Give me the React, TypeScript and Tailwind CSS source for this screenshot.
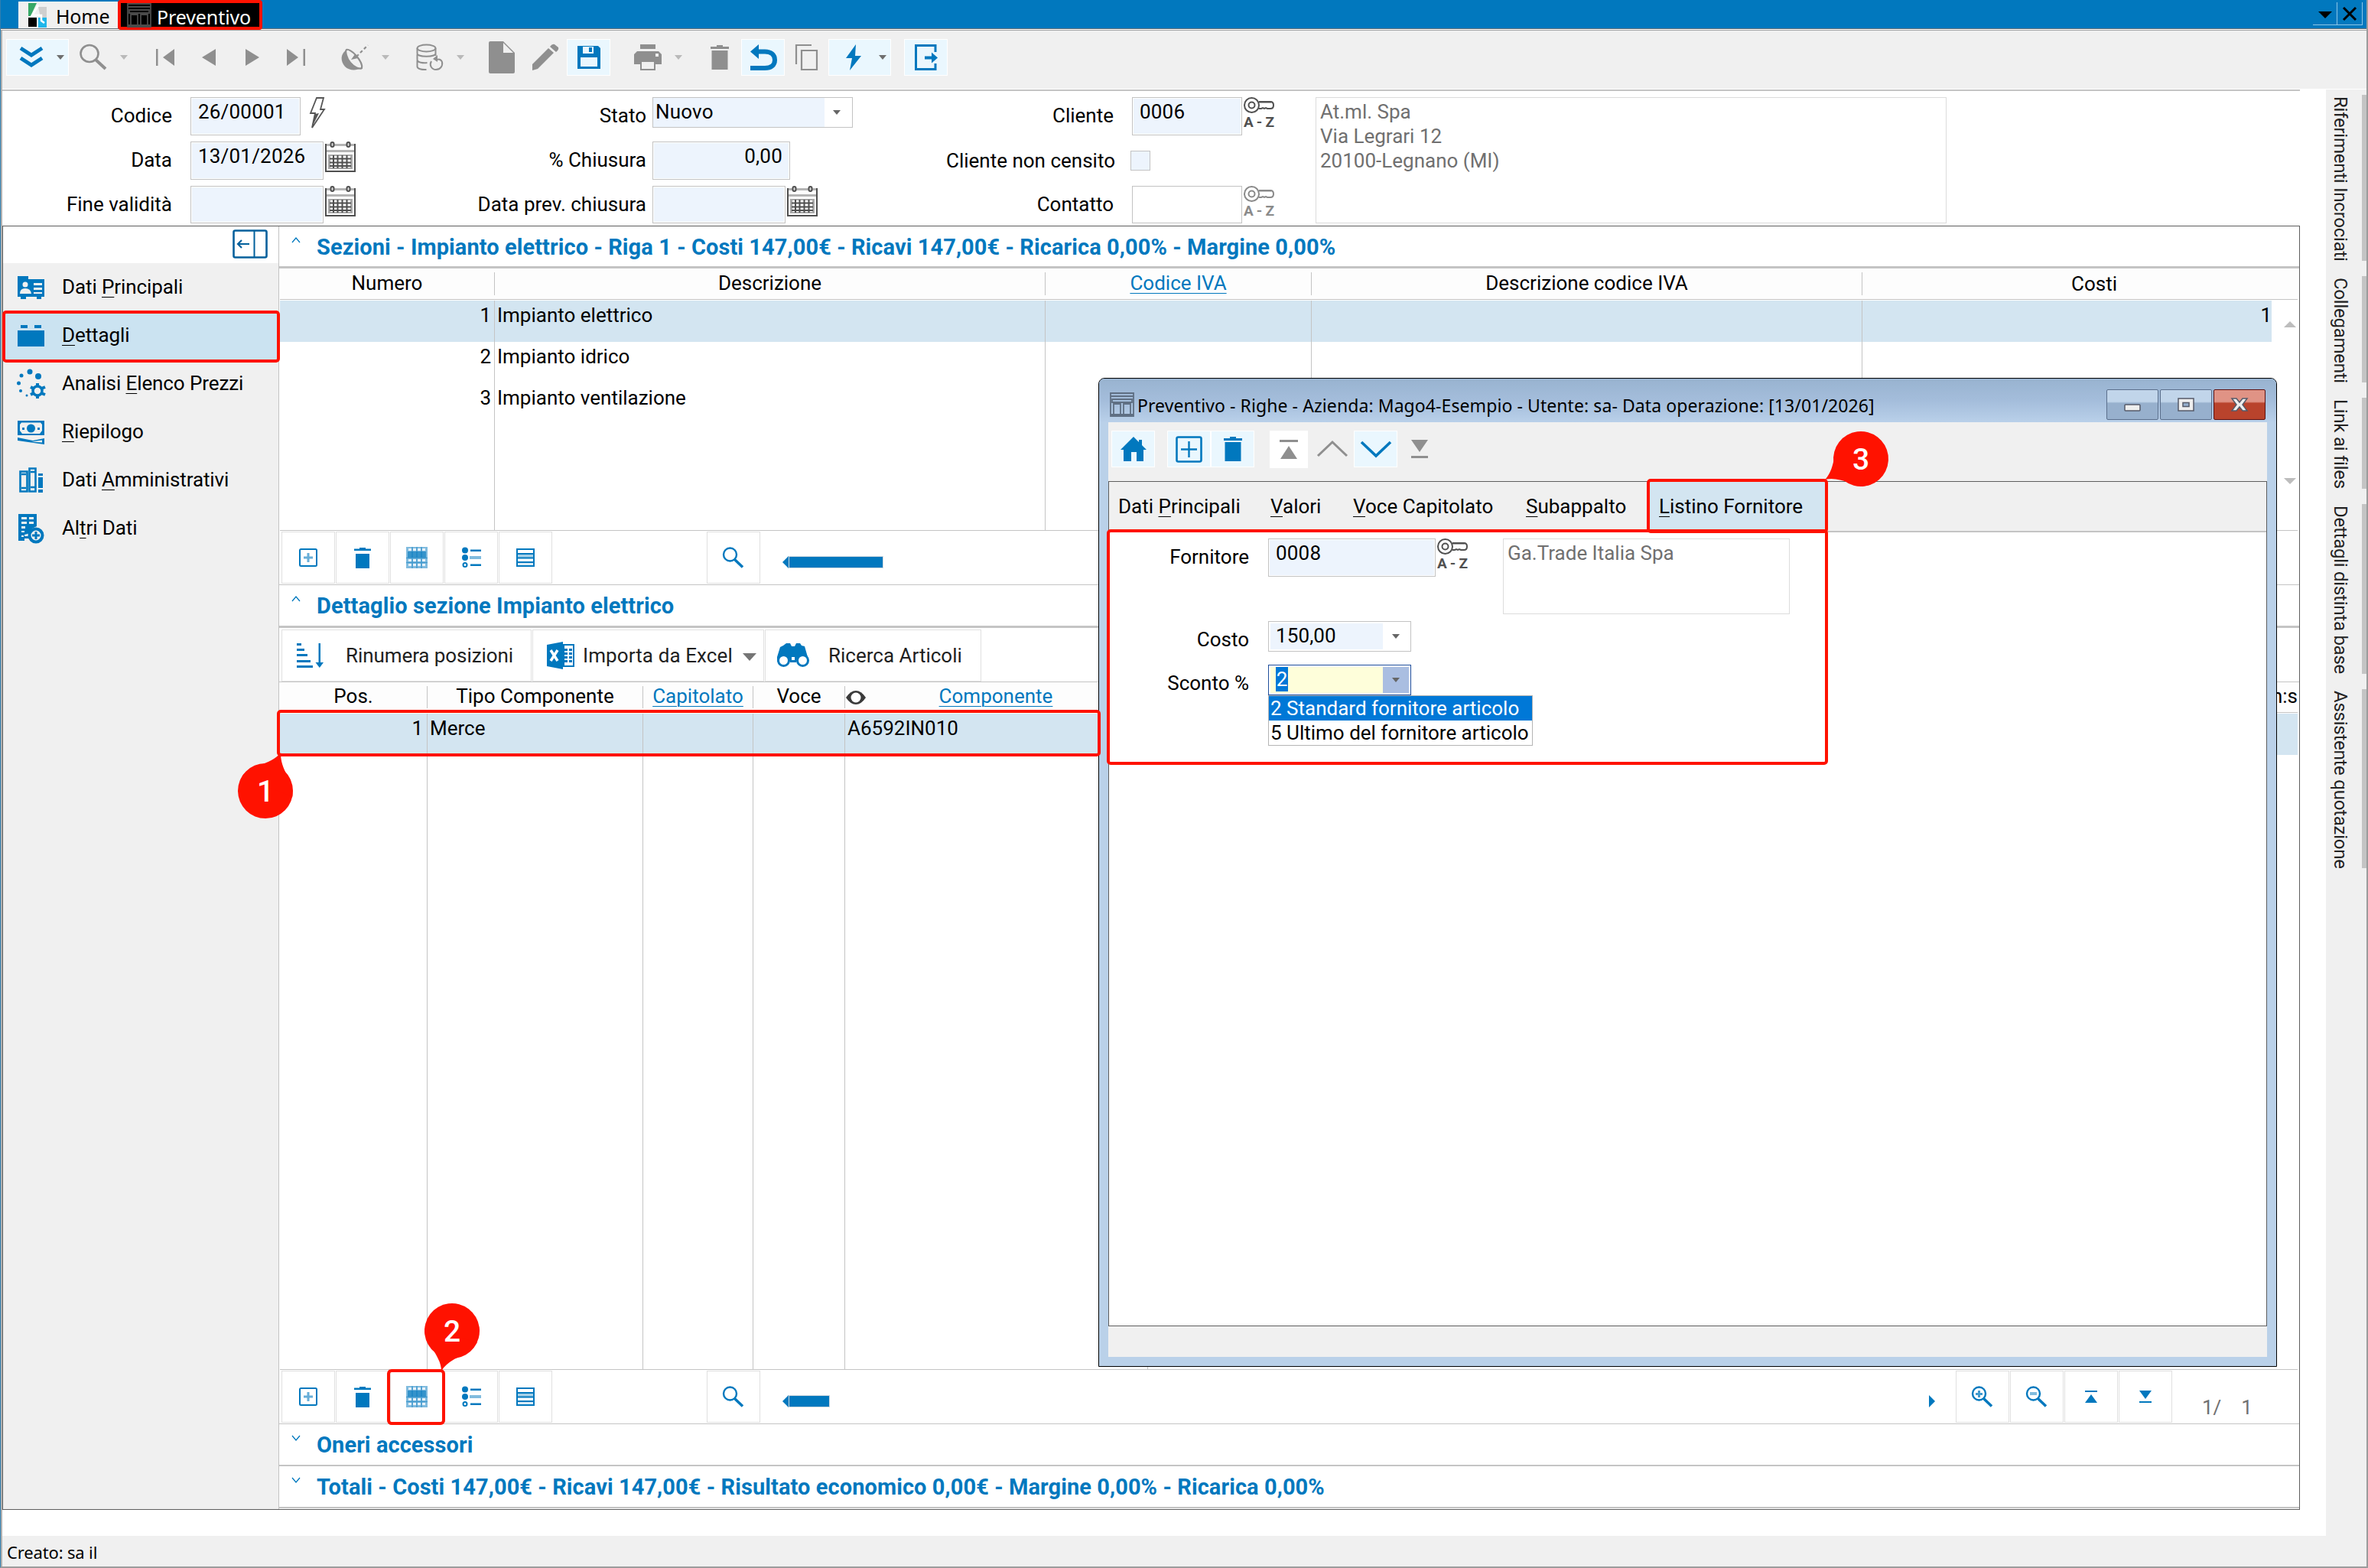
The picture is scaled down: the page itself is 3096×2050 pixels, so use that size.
import React from 'react';

interface GlyphProps {
  w: number;
  h: number;
  className?: string;
  children: React.ReactNode;
}

const Glyph: React.FC<GlyphProps> = ({ w, h, className = '', children }) => (
  <svg width={w} height={h} viewBox={`0 0 ${w} ${h}`} fill="currentColor" className={`shrink-0 overflow-visible ${className}`}>
    {children}
  </svg>
);

// Turns "Dati &Principali" into a label with the access key underlined
const Mnemonic: React.FC<{ text: string }> = ({ text }) => {
  const i = text.indexOf('&');
  return (
    <span className="whitespace-pre">
      {text.slice(0, i)}
      <span className="underline decoration-1 underline-offset-4">{text[i + 1]}</span>
      {text.slice(i + 2)}
    </span>
  );
};

const CaretDown = ({ className = '' }: { className?: string }) => (
  <Glyph w={10} h={6} className={className}><path d="M0 0h10L5 6z" /></Glyph>
);

const ChevronsIcon = () => (
  <Glyph w={32} h={30}>
    <path d="M2 3l14 9 14-9M2 16l14 9 14-9" fill="none" stroke="currentColor" strokeWidth="5" />
  </Glyph>
);

const SearchIcon = () => (
  <Glyph w={36} h={34}>
    <g fill="none" stroke="currentColor">
      <ellipse cx="13" cy="12" rx="11.500" ry="11" strokeWidth="2.600" />
      <path d="M21 20l13 12" strokeWidth="4" />
    </g>
  </Glyph>
);

const FirstIcon = () => <Glyph w={24} h={22}><path d="M0 0h2.5v22H0zM24 0v22L9 11z" /></Glyph>;
const PrevIcon = () => <Glyph w={18} h={22}><path d="M18 0v22L0 11z" /></Glyph>;
const NextIcon = () => <Glyph w={18} h={22}><path d="M0 0v22l18-11z" /></Glyph>;
const LastIcon = () => <Glyph w={24} h={22}><path d="M21.500 0H24v22h-2.500zM0 0v22l15-11z" /></Glyph>;

const DishIcon = () => (
  <Glyph w={36} h={36}>
    <path d="M7 8c2-1 8 2 13 8s8 12 7 16c-3 2-10-1-15-7S5 10 7 8z" fill="none" stroke="currentColor" strokeWidth="2.200" />
    <path d="M6 9c0 6 3 12 8 17 4 4 8 6 12 6-7 4-16 3-21-2C-1 23-1 14 6 9z" />
    <path d="M13 21l5-7 4 5z" />
    <path d="M20 17L35 2" stroke="currentColor" strokeWidth="2.200" strokeDasharray="4 3" />
  </Glyph>
);

const DatabaseIcon = () => (
  <Glyph w={36} h={36}>
    <g fill="none" stroke="currentColor" strokeWidth="2">
      <ellipse cx="13.500" cy="6" rx="12" ry="4.500" />
      <path d="M1.500 6v7c0 5 24 5 24 0V6M1.500 14v7c0 4 8 4.500 13 4M1.500 22v8c0 3 6 4.500 12 4M25.500 13v3" />
      <path d="M20 23c-3 5 0 11 6 11s9-5 8-10c-1-3-4-4-6-3" />
    </g>
    <path d="M28 15v9l-6-4z" />
  </Glyph>
);

const FileIcon = () => (
  <Glyph w={34} h={42}>
    <path d="M2 0h17l15 15v25q0 2-2 2H2q-2 0-2-2V2Q0 0 2 0z" />
    <path d="M19 2v13h13z" fill="#f0f0f0" />
  </Glyph>
);

const PencilIcon = () => (
  <Glyph w={36} h={34}>
    <path d="M1 26L22 5l7 6L8 32l-7 2zM24 3q3-4 6-3l5 4q1 3-3 6z" />
  </Glyph>
);

const SaveIcon = () => (
  <Glyph w={30} h={30}>
    <path d="M0 0h27l3 3v27H0z" />
    <path d="M7 1h14v9H7zM4 15h22v12H4z" fill="#eaf7fe" />
    <path d="M15 2h4v6h-4z" />
  </Glyph>
);

const PrinterIcon = () => (
  <Glyph w={36} h={34}>
    <path d="M8 0h20v6H8zM4 9h28l4 4v13h-8v-5H8v5H0V13z" />
    <path d="M9 22h18v11H9z" fill="#f0f0f0" stroke="currentColor" strokeWidth="2" />
    <path d="M28 12h4v4h-4z" fill="#f0f0f0" />
  </Glyph>
);

const TrashIcon = () => <Glyph w={24} h={32}><path d="M8 0h8v2h8v3H0V2h8zM1.500 7h21v25h-21z" /></Glyph>;

const UndoIcon = () => (
  <Glyph w={36} h={35}>
    <path d="M12 0v19L1 9.500z" />
    <path d="M10 9.500h10c8 0 13 4 13 11s-5 10.500-13 10.500H1" fill="none" stroke="currentColor" strokeWidth="6" />
  </Glyph>
);

const CopyIcon = () => (
  <Glyph w={30} h={34}>
    <path d="M1 26V1h20M8 8h20v25H8z" fill="none" stroke="currentColor" strokeWidth="2.200" />
  </Glyph>
);

const BoltIcon = () => <Glyph w={22} h={34}><path d="M14 0L1 18h8L6 34l15-19h-8z" /></Glyph>;

const ExitIcon = () => (
  <Glyph w={30} h={34}>
    <path d="M27 10V1.500H1.500v31H27V25" fill="none" stroke="currentColor" strokeWidth="3" />
    <path d="M13 15.500h9v-5l8 7-8 7v-5h-9z" />
  </Glyph>
);

const OutlineBolt = () => (
  <Glyph w={22} h={42} className="text-[#555]">
    <path d="M9 1h9l-4 15h5L3 40l4-19H1z" fill="none" stroke="currentColor" strokeWidth="1.800" />
    <path d="M7 22l5-1-9 18z" />
  </Glyph>
);

const CalendarIcon = () => (
  <Glyph w={40} h={40} className="text-[#4f4f4f]">
    <path d="M1 4h38v35H1z" fill="#fff" stroke="currentColor" strokeWidth="2" />
    <path d="M2 3h36v3H2zM2 11h36v3H2z" fill="#b4b4b4" />
    <path d="M4 17h32v19H4z" fill="#a8a8a8" />
    <path d="M7 19h26v15H7z" fill="#fff" />
    <path d="M6 22.500h28M6 27.500h28M6 32h28M11 18v17M16.500 18v17M22.500 18v17M28.500 18v17" stroke="currentColor" strokeWidth="2" />
    <rect x="7.500" y="1" width="4" height="6" rx="2" fill="#ddd" stroke="currentColor" strokeWidth="2" />
    <rect x="28.500" y="1" width="4" height="6" rx="2" fill="#ddd" stroke="currentColor" strokeWidth="2" />
  </Glyph>
);

const KeyIcon = ({ className = 'text-[#505050]' }: { className?: string }) => (
  <div className={`flex w-10 flex-col ${className}`}>
    <Glyph w={40} h={21}>
      <g fill="none" stroke="currentColor" strokeWidth="2">
        <circle cx="10.500" cy="10.500" r="9.500" />
        <circle cx="10.500" cy="10.500" r="4" />
        <path d="M20 6h15q4 0 4 4.500T35 15h-4l-2-1-2 1-2-1-2 1h-3" />
      </g>
      <path d="M20 5h16v3H20z" opacity="0.500" />
    </Glyph>
    <span className="flex h-[22px] justify-between text-[19px] font-bold leading-[23px] tracking-normal">
      <span>A</span><span>-</span><span>Z</span>
    </span>
  </div>
);

const PlusBoxIcon = () => (
  <Glyph w={24} h={24}>
    <rect x="1" y="1" width="22" height="22" rx="1.500" fill="none" stroke="currentColor" strokeWidth="2" />
    <path d="M10.500 6h3v4.500H18v3h-4.500V18h-3v-4.500H6v-3h4.500z" opacity="0.600" />
  </Glyph>
);

const SmallTrashIcon = () => <Glyph w={22} h={27}><path d="M7 0h8v1.500h7V4H0V1.500h7zM2 8h18v19H2z" /></Glyph>;

const GridIcon = () => (
  <Glyph w={28} h={28}>
    <path d="M0 0h28v28H0z" opacity="0.500" />
    <path d="M3 2h4v3H3zM9 2h4v3H9zM15 2h4v3h-4zM21 2h4v3h-4zM3 16h4v3H3zM9 16h4v3H9zM15 16h4v3h-4zM21 16h4v3h-4zM3 22h4v3H3zM9 22h4v3H9zM15 22h4v3h-4zM21 22h4v3h-4z" fill="#e6f1f9" />
    <path d="M2 6h24v8H2z" opacity="0.600" />
    <path d="M0 14.500h28M0 20.500h28M8 0v28M14 0v28M20 0v28" stroke="currentColor" strokeWidth="1.500" opacity="0.450" />
  </Glyph>
);

const BulletsIcon = () => (
  <Glyph w={25} h={28}>
    <circle cx="4" cy="4.500" r="4" />
    <circle cx="4" cy="14" r="4" />
    <circle cx="4" cy="23.500" r="2.500" fill="none" stroke="currentColor" strokeWidth="2" />
    <path d="M11 3.500h14v2.500H11zM11 22.500h14V25H11z" />
    <path d="M10 12h15v4H10z" opacity="0.500" />
  </Glyph>
);

const RowsIcon = () => (
  <Glyph w={24} h={24}>
    <path d="M1 18h22v5H1z" opacity="0.150" />
    <path d="M1 1h22v22H1zM1 7h22M1 12.500h22M1 18h22" fill="none" stroke="currentColor" strokeWidth="2" />
    <path d="M2 8h20v4H2z" opacity="0.350" />
  </Glyph>
);

const SmallSearchIcon = ({ mark }: { mark?: 'plus' | 'minus' }) => (
  <Glyph w={28} h={28}>
    <circle cx="9.500" cy="10" r="8.500" fill="none" stroke="currentColor" strokeWidth="2.400" />
    <path d="M15 16l11 10.500" stroke="currentColor" strokeWidth="3.500" />
    {mark === 'plus' && <path d="M8 6h3v3h3v3h-3v3H8v-3H5V9h3z" opacity="0.750" />}
    {mark === 'minus' && <path d="M5 8h9v4H5z" opacity="0.500" />}
  </Glyph>
);

const ToTopSmall = () => <Glyph w={16} h={16}><path d="M0 0h16v2H0zM8 5l8 11H0z" /></Glyph>;
const ToBottomSmall = () => <Glyph w={16} h={16}><path d="M0 14h16v2H0zM0 0h16L8 11z" /></Glyph>;

const SortIcon = () => (
  <Glyph w={36} h={34}>
    <path d="M1 1h6v3H1zM1 8h10v3H1zM1 15h14v3H1zM1 23h18v3H1zM1 30h21v3H1zM29.500 1h2.500v25h4l-5.200 7-5.300-7h4z" />
  </Glyph>
);

const ExcelIcon = () => (
  <Glyph w={36} h={36}>
    <path d="M0 4l21-4v36L0 32z" />
    <path d="M22 4h13v28H22z" fill="none" stroke="currentColor" strokeWidth="2" />
    <path d="M23 9h4v3h-4zM29 9h4v3h-4zM23 14h4v3h-4zM29 14h4v3h-4zM23 19h4v3h-4zM29 19h4v3h-4zM23 24h4v3h-4zM29 24h4v3h-4z" />
    <path d="M5 11l9 14M14 11L5 25" stroke="#fff" strokeWidth="3.500" />
  </Glyph>
);

const BinocularsIcon = () => (
  <Glyph w={42} h={32}>
    <path d="M12 0h5l2 4h4l2-4h5l2 3 4 1 4 14v6H0v-6L4 5l4-2z" />
    <path d="M17 20h8v5h-8z" />
    <circle cx="8.500" cy="22.500" r="7" fill="#fff" stroke="currentColor" strokeWidth="3" />
    <circle cx="33.500" cy="22.500" r="7" fill="#fff" stroke="currentColor" strokeWidth="3" />
    <path d="M19 18h4v4h-4z" fill="#fff" />
  </Glyph>
);

const EyeIcon = () => (
  <Glyph w={26} h={18} className="text-[#3a3a3a]">
    <path d="M0 9Q6 0 13 0t13 9q-6 9-13 9T0 9z" />
    <circle cx="13" cy="9" r="6.500" fill="#fff" />
  </Glyph>
);

const FormIcon = ({ className = '' }: { className?: string }) => (
  <Glyph w={32} h={32} className={className}>
    <g fill="none" stroke="currentColor" strokeWidth="1.800">
      <path d="M1 1h30v30H1zM1 5h30M3 9h26v4H3zM5 15h9v15H5zM18 15h9v15h-9zM1 29h30" />
    </g>
  </Glyph>
);

const LogoIcon = () => (
  <Glyph w={25} h={32}>
    <path d="M0 0h11L3 17H0z" fill="#37a866" />
    <path d="M13 5h11v14h-8z" fill="#cfcfcf" />
    <path d="M0 19h11v12H0z" fill="#000" />
    <path d="M13 19h11v13H13z" fill="#1fb6ea" />
    <path d="M13 3L5 16h12v7l4 3" fill="none" stroke="#fff" strokeWidth="2.500" />
  </Glyph>
);

const CollapseIcon = () => (
  <Glyph w={46} h={38} className="text-[#01609c]">
    <rect x="1.500" y="1.500" width="43" height="35" rx="2" fill="#fff" stroke="currentColor" strokeWidth="2.600" />
    <path d="M28.500 2v34" stroke="currentColor" strokeWidth="2" />
    <path d="M22 19H7M12 14l-5 5 5 5" fill="none" stroke="currentColor" strokeWidth="2.200" />
  </Glyph>
);

const ContactCardIcon = () => (
  <Glyph w={36} h={30}>
    <path d="M0 0h14v4h21v23h-4v3h-6v-3H11v3H4v-3H0z" />
    <circle cx="10" cy="11" r="3.500" fill="#f0f0f0" />
    <path d="M3 23q0-7 7-7t8 7zM21 9h11v3H21zM21 15h11v3H21zM21 21h11v2H21z" fill="#f0f0f0" />
  </Glyph>
);

const BrickIcon = () => <Glyph w={36} h={30}><path d="M4 1h9v4H4zM22 1h9v4h-9zM0 8h35v21H0z" /></Glyph>;

const GearDotsIcon = () => (
  <Glyph w={38} h={40}>
    <circle cx="17" cy="4" r="3.500" />
    <circle cx="6" cy="9" r="2.500" />
    <circle cx="28" cy="10" r="4" />
    <circle cx="2.500" cy="19" r="2.500" />
    <circle cx="5" cy="29" r="2" />
    <circle cx="13" cy="35" r="1.500" />
    <circle cx="27" cy="29" r="6" fill="none" stroke="currentColor" strokeWidth="3.500" />
    <path d="M27 19v4M27 35v4M18 24l4 2M32 32l5 2M18 34l4-2M32 26l5-2" stroke="currentColor" strokeWidth="4" />
  </Glyph>
);

const BanknoteIcon = () => (
  <Glyph w={36} h={32}>
    <path d="M0 1h35v19H0z" />
    <path d="M5 3.500h25l2 2.500v8l-3 4H6l-3-4V6z" fill="#f0f0f0" />
    <circle cx="17.500" cy="11" r="5.500" />
    <path d="M6 10h3v3H6zM26 10h3v3h-3zM0 23l20 4 15-3v8L0 27z" />
    <path d="M18 28.500l14-2v3z" fill="#f0f0f0" />
  </Glyph>
);

const BindersIcon = () => (
  <Glyph w={32} h={34}>
    <path d="M1.500 5.500h9v26h-9zM13.500 1.500h8v30h-8zM3 9h6M3 27h6M15 6h6M15 26h6" fill="none" stroke="currentColor" strokeWidth="2.600" />
    <path d="M25 8h6v3h-6zM25 13h6v14h-6zM25 29h6v4h-6z" />
  </Glyph>
);

const BuildingPlusIcon = () => (
  <Glyph w={34} h={40}>
    <path d="M0 1h24v16l-6 3-2 6-8 2v2h6v3H8v3H0z" />
    <path d="M4 5h7v3H4zM14 5h6v3h-6zM4 11h7v3H4zM14 11h6v3h-6zM4 17h5v3H4zM4 23h4v2H4zM4 29h3v2H4z" fill="#f0f0f0" />
    <circle cx="23" cy="29" r="8.500" fill="#f0f0f0" stroke="currentColor" strokeWidth="4" />
    <path d="M21.500 24h3v3.500H28v3h-3.500V34h-3v-3.500H18v-3h3.500z" />
  </Glyph>
);

const HomeIcon = () => <Glyph w={34} h={32}><path d="M17 0l7 7V4h4v7l6 6h-4v15h-9V20h-7v12H4V17H0z" /></Glyph>;

const BigPlusIcon = () => (
  <Glyph w={35} h={35}>
    <rect x="1.500" y="1.500" width="32" height="32" rx="2" fill="none" stroke="currentColor" strokeWidth="2.600" />
    <path d="M7 17.500h21M17.500 7v21" stroke="currentColor" strokeWidth="2.400" />
  </Glyph>
);

const ToTopIcon = () => <Glyph w={24} h={25}><path d="M0 0h24v3H0zM12 8l11 17H1z" /></Glyph>;
const ToBottomIcon = () => <Glyph w={24} h={24}><path d="M1 21h22v3H1zM1 0h22L12 16z" /></Glyph>;

const UpIcon = () => (
  <Glyph w={40} h={22}><path d="M1 20L20 2l19 18" fill="none" stroke="currentColor" strokeWidth="3" /></Glyph>
);
const DownIcon = () => (
  <Glyph w={40} h={22}><path d="M1 2l19 18L39 2" fill="none" stroke="currentColor" strokeWidth="3.600" /></Glyph>
);

interface ToolButtonProps {
  active?: boolean;
  drop?: boolean;
  className?: string;
  children: React.ReactNode;
}

const ToolButton: React.FC<ToolButtonProps> = ({ active, drop, className = '', children }) => (
  <div
    className={`flex h-12 shrink-0 items-center border ${
      active ? 'border-white bg-[#eaf7fe] text-[#0178be]' : 'border-transparent text-[#8f8f8f]'
    } ${className}`}
  >
    <div className={`flex items-center justify-center ${active && drop ? 'w-[60px] pl-[3px]' : 'w-[55px]'}`}>{children}</div>
    {drop && (
      <div className={`flex justify-center ${active ? 'w-5' : 'w-[25px]'}`}>
        <CaretDown className={active ? 'text-[#6e6e6e]' : 'text-[#b9b9b9]'} />
      </div>
    )}
  </div>
);

const MainToolbar = () => (
  <div className="flex h-[77px] items-start border-b border-white bg-[#f0f0f0] pl-[5px] pt-[11px]">
    <ToolButton active drop><ChevronsIcon /></ToolButton>
    <ToolButton drop className="ml-[3px]"><SearchIcon /></ToolButton>
    <ToolButton className="ml-3"><FirstIcon /></ToolButton>
    <ToolButton><PrevIcon /></ToolButton>
    <ToolButton><NextIcon /></ToolButton>
    <ToolButton><LastIcon /></ToolButton>
    <ToolButton drop className="ml-5"><DishIcon /></ToolButton>
    <ToolButton drop className="ml-4"><DatabaseIcon /></ToolButton>
    <ToolButton className="ml-3"><FileIcon /></ToolButton>
    <ToolButton><PencilIcon /></ToolButton>
    <ToolButton active><SaveIcon /></ToolButton>
    <ToolButton drop className="ml-5"><PrinterIcon /></ToolButton>
    <ToolButton className="ml-3"><TrashIcon /></ToolButton>
    <ToolButton active><UndoIcon /></ToolButton>
    <ToolButton><CopyIcon /></ToolButton>
    <ToolButton active drop><BoltIcon /></ToolButton>
    <ToolButton active className="ml-[17px]"><ExitIcon /></ToolButton>
  </div>
);

const TitleBar = () => (
  <div className="flex h-10 flex-col">
    <div className="flex h-[37px] justify-between bg-[#0178be] pl-[23px] font-['Noto_Sans',sans-serif] text-[25px]">
      <div className="flex">
        <div className="mt-[2px] flex h-[35px] w-[130px] items-center bg-[#f0f0f0] pl-[13px]">
          <LogoIcon />
          <span className="ml-[11px] mt-1 tracking-[-0.2px]">Home</span>
        </div>
        <div className="z-10 flex h-[39px] w-[189px] items-center rounded-[4px] border-4 border-[#ff1200] bg-black pl-2">
          <FormIcon className="text-[#4a4a4a]" />
          <span className="ml-[7px] mt-[6px] tracking-[-0.1px] text-white">Preventivo</span>
        </div>
      </div>
      <div className="mr-[5px] mt-[3px] flex h-[30px]">
        <div className="flex w-8 items-center justify-center border-b border-r border-[#8ec5e6] pt-1">
          <Glyph w={18} h={9} className="text-black"><path d="M0 0h18L9 9z" /></Glyph>
        </div>
        <div className="flex w-[33px] items-center justify-center border-b border-r border-[#8ec5e6]">
          <Glyph w={20} h={18}><path d="M2 1l16 16M18 1L2 17" stroke="#000" strokeWidth="3" /></Glyph>
        </div>
      </div>
    </div>
    <div className="h-px bg-[#5d6b74]" />
    <div className="h-px bg-white" />
    <div className="h-px bg-[#a0a0a0]" />
  </div>
);

interface FieldProps {
  label: string;
  labelClass: string;
  children: React.ReactNode;
}

const FormRow: React.FC<FieldProps> = ({ label, labelClass, children }) => (
  <div className="flex h-[50px] items-start">
    <span className={`shrink-0 whitespace-nowrap text-right leading-[49px] ${labelClass}`}>{label}</span>
    {children}
  </div>
);

const Box: React.FC<{ className: string; children?: React.ReactNode }> = ({ className, children }) => (
  <div className={`border border-[#c3c3c3] p-px ${className}`}>
    <div className="h-full bg-[#edf4fd] px-2 leading-[35px] tracking-[0.2px]">{children}</div>
  </div>
);

const HeaderForm = () => (
  <div className="flex h-[176px] pt-2">
    <div className="flex w-[597px] flex-col gap-2">
      <FormRow label="Codice" labelClass="w-[222px] mr-6">
        <Box className="h-[50px] w-[144px]">26/00001</Box>
        <div className="ml-3"><OutlineBolt /></div>
      </FormRow>
      <FormRow label="Data" labelClass="w-[222px] mr-6">
        <Box className="mr-[2px] h-[50px] w-[174px]">13/01/2026</Box>
        <CalendarIcon />
      </FormRow>
      <FormRow label="Fine validità" labelClass="w-[222px] mr-6">
        <Box className="mr-[2px] h-[49px] w-[174px]" />
        <CalendarIcon />
      </FormRow>
    </div>
    <div className="flex w-[600px] flex-col gap-2">
      <FormRow label="Stato" labelClass="w-[245px] mr-2">
        <div className="flex h-10 w-[262px] border border-[#c3c3c3] leading-[36px]">
          <div className="w-[224px] bg-[#edf4fd] pl-[3px] tracking-[0.2px]">Nuovo</div>
          <div className="flex flex-1 items-center justify-center pr-1"><CaretDown className="text-[#666]" /></div>
        </div>
      </FormRow>
      <FormRow label="% Chiusura" labelClass="w-[245px] mr-2">
        <Box className="h-[50px] w-[180px] text-right">0,00</Box>
      </FormRow>
      <FormRow label="Data prev. chiusura" labelClass="w-[245px] mr-2">
        <Box className="mr-[2px] h-[49px] w-[174px]" />
        <CalendarIcon />
      </FormRow>
    </div>
    <div className="flex w-[520px] flex-col gap-2">
      <FormRow label="Cliente" labelClass="w-[256px] mr-6">
        <Box className="mr-[2px] h-[50px] w-[144px]">0006</Box>
        <KeyIcon />
      </FormRow>
      <FormRow label="Cliente non censito" labelClass="w-[258px] mr-5 pt-px">
        <div className="mt-3 h-[26px] w-[26px] border border-[#c3c3c3] bg-[#edf4fd]" />
      </FormRow>
      <FormRow label="Contatto" labelClass="w-[256px] mr-6">
        <div className="mr-[2px] h-[49px] w-[144px] border border-[#c3c3c3]" />
        <KeyIcon className="text-[#8a8a8a]" />
      </FormRow>
    </div>
    <div className="h-[165px] w-[825px] border border-[#dcdcdc] px-[5px] pt-[2px] leading-8 text-[#707070]">
      <p>At.ml. Spa</p>
      <p>Via Legrari 12</p>
      <p>20100-Legnano (MI)</p>
    </div>
  </div>
);

const menuItems = [
  { label: 'Dati &Principali', icon: <ContactCardIcon /> },
  { label: '&Dettagli', icon: <BrickIcon />, active: true },
  { label: 'Analisi &Elenco Prezzi', icon: <GearDotsIcon /> },
  { label: '&Riepilogo', icon: <BanknoteIcon /> },
  { label: 'Dati &Amministrativi', icon: <BindersIcon /> },
  { label: 'Al&tri Dati', icon: <BuildingPlusIcon /> },
];

const SideMenu = () => (
  <div className="flex w-[360px] shrink-0 flex-col bg-[#f0f0f0]">
    <div className="flex h-12 justify-end bg-white pr-[14px] pt-1"><CollapseIcon /></div>
    {menuItems.map(item => (
      <div key={item.label} className={`relative flex h-[63px] items-center ${item.active ? 'bg-[#cbe3f1]' : ''}`}>
        <div className="flex w-[74px] items-center justify-center text-[#0178be]">{item.icon}</div>
        <span className="ml-[3px] whitespace-nowrap tracking-[-0.1px]"><Mnemonic text={item.label} /></span>
        {item.active && (
          <div className="absolute -left-px -right-[2px] -top-px h-[68px] rounded-[5px] border-4 border-[#ff1200]" />
        )}
      </div>
    ))}
  </div>
);

const SectionTitle: React.FC<{ title: string; open?: boolean; className: string }> = ({ title, open, className }) => (
  <div className={`flex items-center border-[#c4c4c4] pl-4 pt-[3px] text-[29px] font-bold tracking-[0.08px] text-[#0178be] ${className}`}>
    <Glyph w={12} h={8} className="-mt-[20px]">
      <path d={open ? 'M1 7l5-6 5 6' : 'M1 1l5 6 5-6'} fill="none" stroke="currentColor" strokeWidth="1.300" />
    </Glyph>
    <span className="ml-[21px] whitespace-nowrap">{title}</span>
  </div>
);

const IconCell: React.FC<{ className?: string; children: React.ReactNode }> = ({ className = '', children }) => (
  <div className={`flex h-[68px] w-[70px] items-center justify-center border border-[#e0e0e0] text-[#0178be] ${className}`}>
    {children}
  </div>
);

const GridToolbar: React.FC<{ thumb: string; paging?: boolean }> = ({ thumb, paging }) => (
  <div className="flex h-[71px] gap-px border-b border-[#c4c4c4] pl-[3px] pt-px text-[#0178be]">
    <IconCell><PlusBoxIcon /></IconCell>
    <IconCell><SmallTrashIcon /></IconCell>
    <IconCell className="relative">
      <GridIcon />
      {paging && <div className="absolute -left-[5px] -top-[3px] h-[73px] w-[76px] rounded-[6px] border-4 border-[#ff1200]" />}
    </IconCell>
    <IconCell><BulletsIcon /></IconCell>
    <IconCell><RowsIcon /></IconCell>
    <IconCell className="ml-[201px]"><SmallSearchIcon /></IconCell>
    <div className="ml-7 mt-8 flex h-4">
      <Glyph w={8} h={16}><path d="M8 0v16L0 8z" /></Glyph>
      <div className={`h-4 border border-[#d0d8de] bg-[#0178be] ${thumb}`} />
    </div>
    {paging && (
      <div className="ml-auto mr-[73px] flex gap-px">
        <Glyph w={8} h={16} className="mr-[26px] mt-8"><path d="M0 0v16l8-8z" /></Glyph>
        <IconCell><SmallSearchIcon mark="plus" /></IconCell>
        <IconCell><SmallSearchIcon mark="minus" /></IconCell>
        <IconCell><ToTopSmall /></IconCell>
        <IconCell><ToBottomSmall /></IconCell>
        <span className="ml-[38px] mt-[29px] w-[54px] whitespace-pre text-[#707070]">1/    1</span>
      </div>
    )}
  </div>
);

interface Column {
  title: string;
  width: string;
  align?: string;
  link?: boolean;
  eye?: boolean;
  cells: string[];
}

const sectionColumns: Column[] = [
  { title: 'Numero', width: 'w-[281px]', align: 'text-right pr-1', cells: ['1', '2', '3'] },
  { title: 'Descrizione', width: 'w-[720px]', align: 'pl-[3px]', cells: ['Impianto elettrico', 'Impianto idrico', 'Impianto ventilazione'] },
  { title: 'Codice IVA', width: 'w-[348px]', link: true, cells: ['', '', ''] },
  { title: 'Descrizione codice IVA', width: 'w-[720px]', cells: ['', '', ''] },
];

const detailColumns: Column[] = [
  { title: 'Pos.', width: 'w-[193px]', align: 'text-right pr-[5px]', cells: ['1'] },
  { title: 'Tipo Componente', width: 'w-[282px]', align: 'pl-[3px]', cells: ['Merce'] },
  { title: 'Capitolato', width: 'w-[144px]', link: true, cells: [''] },
  { title: 'Voce', width: 'w-[120px]', cells: [''] },
  { title: 'Componente', width: 'w-[396px]', align: 'pl-[3px]', link: true, eye: true, cells: ['A6592IN010'] },
];

const HeadCell: React.FC<{ col: Column }> = ({ col }) => (
  <div className={`my-[5px] flex shrink-0 items-center justify-center border-r border-[#c4c4c4] ${col.width}`}>
    {col.eye && <div className="-mr-[28px] ml-px"><EyeIcon /></div>}
    <span className={`-mt-[2px] whitespace-nowrap text-center ${col.eye ? 'flex-1' : ''} ${col.link ? 'text-[#0178be] underline decoration-1 underline-offset-4' : ''}`}>
      {col.title}
    </span>
  </div>
);

const BodyColumn: React.FC<{ col: Column }> = ({ col }) => (
  <div className={`flex shrink-0 flex-col border-r border-[#c4c4c4] ${col.width}`}>
    {col.cells.map((cell, i) => (
      <div key={i} className={`h-[54px] whitespace-nowrap leading-[38px] ${i === 0 ? 'bg-[#d3e5f1]' : ''} ${col.align ?? ''}`}>
        {cell}
      </div>
    ))}
  </div>
);

const SectionsGrid = () => (
  <div className="ml-px mr-[2px]">
    <div className="flex h-[41px] overflow-hidden border-b border-[#c4c4c4] bg-[#fdfdfd]">
      {sectionColumns.map(col => <HeadCell key={col.title} col={col} />)}
      <div className="-mr-[60px] flex flex-1 items-center justify-center pr-[23px]">Costi</div>
    </div>
    <div className="mt-px flex h-[301px] border-b border-[#c4c4c4]">
      {sectionColumns.map(col => <BodyColumn key={col.title} col={col} />)}
      <div className="h-[54px] flex-1 bg-[#d3e5f1] text-right leading-[38px]">1</div>
      <div className="flex w-[34px] flex-col items-center justify-between pb-[60px] pt-[27px] text-[#bdbdbd]">
        <Glyph w={16} h={8} className="ml-[14px]"><path d="M8 0l8 8H0z" /></Glyph>
        <Glyph w={16} h={8} className="ml-[14px]"><path d="M0 0h16L8 8z" /></Glyph>
      </div>
    </div>
  </div>
);

const DetailActions = () => (
  <div className="flex h-[71px] gap-px border-b border-[#c4c4c4] pl-[3px] pt-[2px] text-[#1f1f1f]">
    <div className="flex h-[68px] w-[327px] items-center border border-[#e0e0e0] pl-[18px]">
      <span className="text-[#0178be]"><SortIcon /></span>
      <span className="ml-[29px] tracking-[-0.08px]">Rinumera posizioni</span>
    </div>
    <div className="flex h-[68px] w-[303px] items-center border border-[#e0e0e0] pl-[18px]">
      <span className="text-[#0178be]"><ExcelIcon /></span>
      <span className="ml-[11px] whitespace-nowrap tracking-[0.1px]">Importa da Excel</span>
      <Glyph w={18} h={10} className="ml-[13px] mt-1 text-[#757575]"><path d="M0 0h18l-9 10z" /></Glyph>
    </div>
    <div className="flex h-[68px] w-[283px] items-center border border-[#e0e0e0] pl-[15px]">
      <span className="text-[#0178be]"><BinocularsIcon /></span>
      <span className="ml-[25px]">Ricerca Articoli</span>
    </div>
  </div>
);

const DetailGrid = () => (
  <div className="relative ml-px mr-[2px]">
    <div className="flex h-10 justify-between overflow-hidden border-b border-[#c4c4c4] bg-[#fdfdfd]">
      <div className="flex">
        {detailColumns.map(col => <HeadCell key={col.title} col={col} />)}
      </div>
      <span className="leading-[37px]">h:m:s</span>
    </div>
    <div className="mt-px flex h-[858px] border-b border-[#c4c4c4]">
      {detailColumns.map(col => <BodyColumn key={col.title} col={col} />)}
      <div className="h-[54px] flex-1 bg-[#d3e5f1]" />
    </div>
    <div className="absolute -left-1 top-[36px] z-10 h-[61px] w-[1077px] rounded-[5px] border-4 border-[#ff1200]" />
  </div>
);

const MainPanel = () => (
  <div className="flex h-[1679px] w-[3004px] border border-[#5e5e5e]">
    <SideMenu />
    <div className="flex min-w-0 flex-1 flex-col border-l border-[#c4c4c4]">
      <SectionTitle open title="Sezioni - Impianto elettrico - Riga 1 - Costi 147,00€ - Ricavi 147,00€ - Ricarica 0,00% - Margine 0,00%" className="h-[55px] border-b-[3px]" />
      <SectionsGrid />
      <GridToolbar thumb="w-[124px]" />
      <SectionTitle open title="Dettaglio sezione Impianto elettrico" className="h-14 border-b-[3px]" />
      <DetailActions />
      <DetailGrid />
      <GridToolbar thumb="w-[54px]" paging />
      <SectionTitle title="Oneri accessori" className="h-[55px] border-b-2" />
      <SectionTitle title="Totali - Costi 147,00€ - Ricavi 147,00€ - Risultato economico 0,00€ - Margine 0,00% - Ricarica 0,00%" className="h-[55px] border-b-2" />
    </div>
  </div>
);

const drawers = [
  { label: 'Riferimenti Incrociati', height: 'h-[217px]' },
  { label: 'Collegamenti', height: 'h-[139px]' },
  { label: 'Link ai files', height: 'h-[119px]' },
  { label: 'Dettagli distinta base', height: 'h-[222px]' },
  { label: 'Assistente quotazione', height: 'h-[234px]' },
];

const DrawerBar = () => (
  <div className="flex w-[53px] flex-col gap-5 bg-[#f0f0f0] pt-[7px]">
    {drawers.map(d => (
      <div key={d.label} className={`border-r-[6px] border-[#c4c4c4] pt-[2px] ${d.height}`}>
        <span className="whitespace-nowrap text-[24px] leading-[37px] tracking-[-0.25px] text-[#222] [writing-mode:vertical-rl]">{d.label}</span>
      </div>
    ))}
  </div>
);

const windowButtons = [
  { id: 'min', tone: 'border-[#5b6f8c] from-[#c1d5ea] to-[#97b0cd]', icon: <rect x="1" y="9" width="20" height="8" rx="1" fill="#eee" stroke="#555a68" strokeWidth="1.500" /> },
  { id: 'max', tone: 'border-[#5b6f8c] from-[#c1d5ea] to-[#97b0cd]', icon: <path d="M1 1h20v16H1zM7 6.500h8v5H7z" fillRule="evenodd" fill="#eee" stroke="#555a68" strokeWidth="1.500" /> },
  { id: 'close', tone: 'border-[#5c1010] from-[#e09385] to-[#b9432c]', icon: <path d="M1 1h6l4 5 4-5h6l-6 8 6 8h-6l-4-5-4 5H1l6-8z" fill="#eee" stroke="#555a68" strokeWidth="1.500" /> },
];

const dialogTabs = [
  { label: 'Dati &Principali', width: 'w-[199px]' },
  { label: '&Valori', width: 'w-[108px]' },
  { label: '&Voce Capitolato', width: 'w-[226px]' },
  { label: '&Subappalto', width: 'w-[160px]' },
];

const RowsDialog = () => (
  <div className="absolute left-[1435px] top-[494px] flex h-[1293px] w-[1541px] flex-col rounded-t-[8px] border border-black bg-[#bad1e9] px-3 pb-3">
    <div className="-mx-3 flex h-[57px] items-start rounded-t-[7px] bg-linear-to-b from-[#98b3d0] via-[#a4bddb] to-[#b9d0e9] pl-[14px] pr-[14px]">
      <FormIcon className="mt-[18px] text-[#5f6f83]" />
      <span className="ml-1 mt-[17px] whitespace-nowrap font-['Noto_Sans',sans-serif] text-[23px] leading-[36px] tracking-[0.08px]">
        Preventivo - Righe - Azienda: Mago4-Esempio - Utente: sa- Data operazione: [13/01/2026]
      </span>
      <div className="ml-auto mt-[14px] flex gap-[2px]">
        {windowButtons.map(b => (
          <div key={b.id} className={`flex h-10 w-[68px] items-center justify-center rounded-[2px] border bg-linear-to-b from-40% to-45% ${b.tone}`}>
            <Glyph w={22} h={18}>{b.icon}</Glyph>
          </div>
        ))}
      </div>
    </div>
    <div className="flex h-[77px] items-start bg-[#f0f0f0] pl-1 pt-[11px]">
      <ToolButton active><HomeIcon /></ToolButton>
      <ToolButton active className="ml-4"><BigPlusIcon /></ToolButton>
      <ToolButton active><TrashIcon /></ToolButton>
      <div className="ml-5 flex h-[49px] w-[50px] items-center justify-center bg-white text-[#8f8f8f]"><ToTopIcon /></div>
      <ToolButton className="ml-[3px]"><UpIcon /></ToolButton>
      <ToolButton active><DownIcon /></ToolButton>
      <ToolButton><ToBottomIcon /></ToolButton>
    </div>
    <div className="flex h-[1105px] flex-col border border-[#5e5e5e] bg-white">
      <div className="relative flex h-[66px] border-b-2 border-[#c4c4c4] bg-[#f0f0f0] pl-3 leading-[64px]">
        {dialogTabs.map(t => (
          <div key={t.label} className={t.width}><Mnemonic text={t.label} /></div>
        ))}
        <div className="absolute left-[703px] top-[-4px] flex h-[71px] w-[237px] items-center rounded-[5px] border-4 border-[#ff1200] bg-[#d3e5f1] pl-3">
          <Mnemonic text="&Listino Fornitore" />
        </div>
      </div>
      <div className="relative flex h-[304px] pt-2">
        <div className="absolute -left-[3px] -top-[4px] h-[308px] w-[943px] rounded-[5px] border-4 border-[#ff1200]" />
        <div className="flex w-[515px] flex-col">
          <FormRow label="Fornitore" labelClass="w-[183px] mr-[25px]">
            <Box className="mr-[2px] h-[50px] w-[219px]">0008</Box>
            <KeyIcon />
          </FormRow>
          <div className="mt-[58px]">
            <FormRow label="Costo" labelClass="w-[183px] mr-[25px]">
              <div className="flex h-10 w-[187px] border border-[#c3c3c3] p-[2px]">
                <div className="w-[147px] bg-[#edf4fd] pl-[7px] leading-[33px] tracking-[0.1px]">150,00</div>
                <div className="flex flex-1 items-center justify-center"><CaretDown className="text-[#666]" /></div>
              </div>
            </FormRow>
          </div>
          <div className="mt-[7px]">
            <FormRow label="Sconto %" labelClass="w-[183px] mr-[25px]">
              <div className="relative flex h-10 w-[187px] border border-[#1f4e9c] p-[2px]">
                <div className="w-[147px] bg-[#fefeda] pl-[7px]">
                  <span className="block h-8 w-4 bg-[#0078d7] text-center leading-8 text-white">2</span>
                </div>
                <div className="flex flex-1 items-center justify-center bg-[#aabee1]"><CaretDown className="text-[#666]" /></div>
                <div className="absolute -left-px top-[39px] w-[346px] border border-[#b5b5b5] bg-white leading-8">
                  <div className="bg-[#0078d7] pl-[2px] text-white">2 Standard fornitore articolo</div>
                  <div className="whitespace-nowrap pl-[2px]">5 Ultimo del fornitore articolo</div>
                </div>
              </div>
            </FormRow>
          </div>
        </div>
        <div className="h-[99px] w-[375px] border border-[#dcdcdc] px-[5px] pt-[2px] leading-8 text-[#707070]">Ga.Trade Italia Spa</div>
      </div>
    </div>
    <div className="h-10 bg-[#f0f0f0]" />
  </div>
);

// Numbered marker: `turn` rotates the tip, the digit stays upright
const Pin: React.FC<{ n: number; turn: number; className: string }> = ({ n, turn, className }) => (
  <svg width="110" height="110" viewBox="-55 -55 110 110" className={`absolute ${className}`}>
    <g fill="#ff1200" transform={`rotate(${turn})`}>
      <circle r="36" />
      <path d="M-35.500 6C-31 26-7 32 0 54 7 32 31 26 35.500 6z" />
    </g>
    <text y="14" textAnchor="middle" fontSize="39" fontWeight="500" fontFamily="Roboto, sans-serif" fill="#fff">{n}</text>
  </svg>
);

const App: React.FC = () => (
  <div className="relative flex h-[2050px] w-[3096px] flex-col overflow-hidden border-b-2 border-l border-r-2 border-b-[#9c9c9c] border-l-[#2f7fb0] border-r-[#9c9c9c] bg-white font-[Roboto,sans-serif] text-[26px] text-black">
    <TitleBar />
    <div className="flex flex-1 flex-col border-l-2 border-[#b0b0b0]">
      <MainToolbar />
      <div className="flex flex-1">
        <div className="flex w-[3038px] flex-col">
          <div className="h-[2px] w-[3004px] bg-[#c4c4c4]" />
          <HeaderForm />
          <MainPanel />
        </div>
        <DrawerBar />
      </div>
      <div className="h-10 bg-[#f0f0f0] pl-[6px] font-['Noto_Sans',sans-serif] text-[22px] leading-[43px] tracking-[-0.15px]">Creato: sa il</div>
    </div>
    <RowsDialog />
    <Pin n={1} turn={202} className="left-[291px] top-[979px]" />
    <Pin n={2} turn={15} className="left-[535px] top-[1685px]" />
    <Pin n={3} turn={60} className="left-[2377px] top-[545px]" />
  </div>
);

export default App;
